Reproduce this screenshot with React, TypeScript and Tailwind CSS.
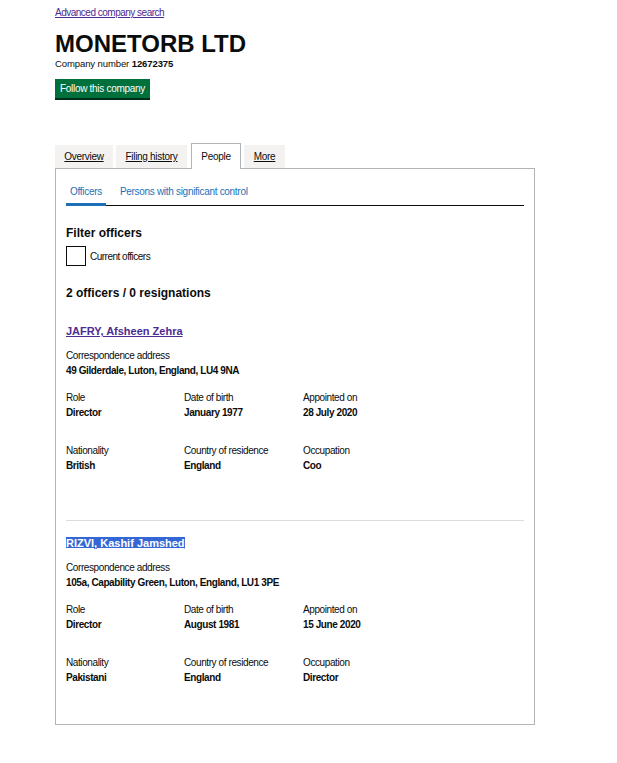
import React from 'react';

const body = { fontFamily: '"Liberation Sans", Arial, sans-serif' };

type Officer = {
  name: string;
  address: string;
  role: string;
  dob: string;
  appointed: string;
  nationality: string;
  residence: string;
  occupation: string;
  selected?: boolean;
};

const officers: Officer[] = [
  {
    name: 'JAFRY, Afsheen Zehra',
    address: '49 Gilderdale, Luton, England, LU4 9NA',
    role: 'Director',
    dob: 'January 1977',
    appointed: '28 July 2020',
    nationality: 'British',
    residence: 'England',
    occupation: 'Coo',
  },
  {
    name: 'RIZVI, Kashif Jamshed',
    address: '105a, Capability Green, Luton, England, LU1 3PE',
    role: 'Director',
    dob: 'August 1981',
    appointed: '15 June 2020',
    nationality: 'Pakistani',
    residence: 'England',
    occupation: 'Director',
    selected: true,
  },
];

function Field({ label, value }: { label: string; value: string }) {
  return (
    <div className="flex flex-col">
      <span className="text-[10px] leading-[15px] tracking-[-0.04em] text-[#0b0c0c]">{label}</span>
      <span className="text-[10px] leading-[15px] tracking-[-0.04em] font-bold text-[#0b0c0c]">{value}</span>
    </div>
  );
}

function OfficerCard({ o }: { o: Officer }) {
  return (
    <div className="flex flex-col">
      <div className="leading-[16px]">
        <a
          href="#"
          className={
            o.selected
              ? 'text-[11px] font-bold underline text-white bg-[#3367d6]'
              : 'text-[11px] font-bold underline text-[#4c2c92]'
          }
        >
          {o.name}
        </a>
      </div>
      <div className="mt-[9px]">
        <Field label="Correspondence address" value={o.address} />
      </div>
      <div className="grid grid-cols-[118px_119px_118px] mt-[12px]">
        <Field label="Role" value={o.role} />
        <Field label="Date of birth" value={o.dob} />
        <Field label="Appointed on" value={o.appointed} />
      </div>
      <div className="grid grid-cols-[118px_119px_118px] mt-[23px]">
        <Field label="Nationality" value={o.nationality} />
        <Field label="Country of residence" value={o.residence} />
        <Field label="Occupation" value={o.occupation} />
      </div>
    </div>
  );
}

export default function App() {
  return (
    <div className="min-h-screen bg-white px-[55px] text-[#0b0c0c]" style={body}>
      <div className="pt-[4px] leading-[14px]">
        <a href="#" className="text-[10px] tracking-[-0.05em] underline text-[#4c2c92]">
          Advanced company search
        </a>
      </div>

      <h1 className="mt-[10px] text-[24px] leading-[28px] font-bold">MONETORB LTD</h1>
      <p className="text-[9.5px] leading-[12px] tracking-[-0.01em]">
        Company number <span className="font-bold">12672375</span>
      </p>

      <button
        type="button"
        className="mt-[9px] h-[19px] w-[95px] bg-[#00703c] text-white text-[10px] tracking-[-0.03em] shadow-[0_2px_0_#002d18]"
      >
        Follow this company
      </button>

      {/* Tabs */}
      <div className="mt-[44px] flex items-end gap-[3px] text-[10px] tracking-[-0.03em]">
        <a href="#" className="h-[23px] w-[58px] bg-[#f3f2f1] flex items-center justify-center underline">
          Overview
        </a>
        <a href="#" className="h-[23px] w-[71px] bg-[#f3f2f1] flex items-center justify-center underline">
          Filing history
        </a>
        <span className="relative z-10 -mb-px ml-[1px] h-[26px] w-[50px] bg-white border border-b-0 border-[#b1b4b6] flex items-center justify-center text-[10px]">
          People
        </span>
        <a href="#" className="h-[23px] w-[41px] bg-[#f3f2f1] flex items-center justify-center underline">
          More
        </a>
      </div>

      {/* Panel */}
      <div className="w-[480px] h-[557px] border border-[#b1b4b6] px-[10px] pt-[15px]">
        <div className="flex gap-[10px] border-b border-[#0b0c0c] text-[10px] tracking-[-0.03em]">
          <span className="px-[4px] pb-[4px] leading-[15px] text-[#1d70b8] border-b-[3px] border-[#1d70b8] -mb-px">
            Officers
          </span>
          <span className="px-[4px] pb-[4px] leading-[15px] text-[#1d70b8]">
            Persons with significant control
          </span>
        </div>

        <h2 className="mt-[19px] text-[12px] leading-[16px] font-bold">Filter officers</h2>
        <label className="mt-[5px] flex items-center gap-[4px]">
          <span className="w-[20px] h-[20px] border-[1.5px] border-[#0b0c0c] bg-white" />
          <span className="text-[10px] tracking-[-0.05em]">Current officers</span>
        </label>

        <h2 className="mt-[19px] text-[12px] leading-[16px] font-bold">2 officers / 0 resignations</h2>

        <div className="mt-[21px]">
          <OfficerCard o={officers[0]} />
        </div>
        <div className="mt-[47px] border-t border-[#dcdcdc]" />
        <div className="mt-[13px]">
          <OfficerCard o={officers[1]} />
        </div>
      </div>
    </div>
  );
}
